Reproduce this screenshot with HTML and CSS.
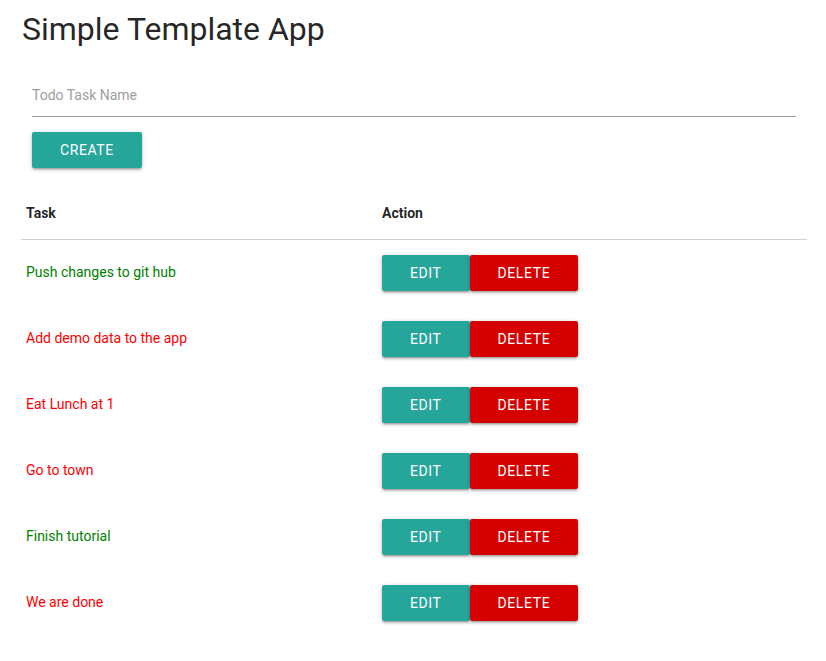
FILE: index.html
```html
<!DOCTYPE html>
<html>
<head>
<meta charset="utf-8">
<title>Simple Template App</title>
<link rel="stylesheet" href="styles.css">
</head>
<body>
<div class="container">
  <h1 class="title">Simple Template App</h1>
  <div class="form">
    <input class="task-input" type="text" placeholder="Todo Task Name">
    <div class="form-actions">
      <button class="btn btn-teal">Create</button>
    </div>
  </div>
  <table class="tasks">
    <colgroup><col class="col-task"><col class="col-action"></colgroup>
    <thead>
      <tr><th>Task</th><th>Action</th></tr>
    </thead>
    <tbody>
      <tr><td class="task done">Push changes to git hub</td><td><div class="actions"><button class="btn btn-teal">Edit</button><button class="btn btn-red">Delete</button></div></td></tr>
      <tr><td class="task pending">Add demo data to the app</td><td><div class="actions"><button class="btn btn-teal">Edit</button><button class="btn btn-red">Delete</button></div></td></tr>
      <tr><td class="task pending">Eat Lunch at 1</td><td><div class="actions"><button class="btn btn-teal">Edit</button><button class="btn btn-red">Delete</button></div></td></tr>
      <tr><td class="task pending">Go to town</td><td><div class="actions"><button class="btn btn-teal">Edit</button><button class="btn btn-red">Delete</button></div></td></tr>
      <tr><td class="task done">Finish tutorial</td><td><div class="actions"><button class="btn btn-teal">Edit</button><button class="btn btn-red">Delete</button></div></td></tr>
      <tr><td class="task pending">We are done</td><td><div class="actions"><button class="btn btn-teal">Edit</button><button class="btn btn-red">Delete</button></div></td></tr>
    </tbody>
  </table>
</div>
</body>
</html>
```
FILE: styles.css
```css
html, body {
  margin: 0;
  padding: 0;
  background: #fff;
}
body {
  font-family: Roboto, "Liberation Sans", sans-serif;
  font-size: 14px;
  color: rgba(0, 0, 0, 0.87);
}
.container {
  padding: 0 19px 0 21px;
}
.title {
  font-size: 32px;
  font-weight: 400;
  line-height: 36px;
  margin: 11px 0 0 1px;
}
.form {
  padding: 0 11px;
  margin-top: 26px;
}
.task-input {
  display: block;
  box-sizing: border-box;
  width: 100%;
  height: 44px;
  border: none;
  border-bottom: 1px solid #9e9e9e;
  outline: none;
  padding: 0;
  margin: 0;
  font-family: Roboto, "Liberation Sans", sans-serif;
  font-size: 14px;
  color: rgba(0, 0, 0, 0.87);
  background: transparent;
}
.task-input::placeholder {
  color: #9e9e9e;
}
.form-actions {
  margin-top: 15px;
  display: flex;
}
.btn {
  display: inline-block;
  height: 36px;
  line-height: 36px;
  padding: 0 28px;
  border: none;
  border-radius: 2px;
  font-family: Roboto, "Liberation Sans", sans-serif;
  font-size: 14px;
  letter-spacing: 0.6px;
  text-transform: uppercase;
  color: #fff;
  cursor: pointer;
  box-shadow: 0 2px 2px 0 rgba(0,0,0,0.14), 0 3px 1px -2px rgba(0,0,0,0.12), 0 1px 5px 0 rgba(0,0,0,0.2);
}
.btn-teal {
  background: #26a69a;
}
.btn-red {
  background: #d50000;
}
.tasks {
  width: 100%;
  margin-top: 19px;
  border-collapse: collapse;
  table-layout: fixed;
}
.col-task {
  width: 356px;
}
.tasks th {
  text-align: left;
  font-weight: 700;
  font-size: 14px;
  line-height: 22px;
  padding: 15px 5px;
  border-bottom: 1px solid #d0d0d0;
}
.tasks td {
  padding: 15px 5px;
  line-height: 36px;
  vertical-align: middle;
}
.tasks td.task {
  padding: 14px 5px 16px;
}
.actions {
  display: flex;
}
.done {
  color: #008000;
}
.pending {
  color: #ff0000;
}
```
